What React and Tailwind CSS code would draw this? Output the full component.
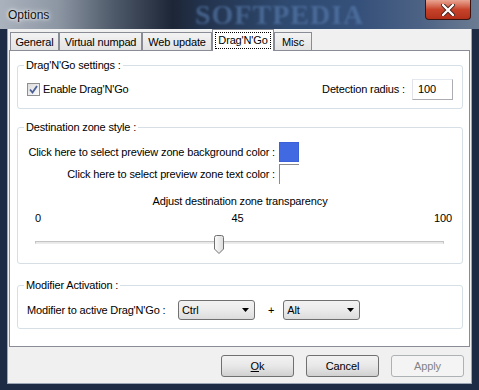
import React, { useState } from "react";

const FONT = "font-['Liberation_Sans',Arial,sans-serif] text-[11px] tracking-[-0.15px] leading-[13px] text-black";

function Tab({ label, width, active, onClick }) {
    if (active) {
        return (
            <div
                onClick={onClick}
                className={`relative z-10 -mb-[1px] flex h-[22px] items-start justify-center border border-b-0 border-[#898c95] bg-white pt-[2px] ${width}`}
            >
                <span className="border border-dotted border-black px-[2px] py-[1px]">{label}</span>
            </div>
        );
    }
    return (
        <div
            onClick={onClick}
            className={`flex h-[18px] items-center justify-center border border-b-0 border-[#898c95] bg-gradient-to-b from-[#f3f3f3] to-[#e3e3e3] pt-[2px] ${width}`}
        >
            {label}
        </div>
    );
}

function Group({ title, className, children }) {
    return (
        <div className={`relative ml-[7px] w-[446px] rounded-[3px] border border-[#d5dfe5] ${className}`}>
            <span className="absolute -top-[7px] left-[6px] bg-white px-[2px]">{title}</span>
            {children}
        </div>
    );
}

function Combo({ value }) {
    return (
        <div className="flex h-[20px] w-[77px] items-center justify-between rounded-[3px] border border-[#707070] bg-gradient-to-b from-[#f2f2f2] via-[#ebebeb] to-[#dcdcdc] pl-[3px] pr-[5px]">
            <span>{value}</span>
            <svg width="7" height="4" viewBox="0 0 7 4">
                <path d="M0 0 H7 L3.5 4 Z" fill="#000" />
            </svg>
        </div>
    );
}

function Button({ children, disabled }) {
    return (
        <div
            className={classNames(
                "flex h-[22px] w-[73px] items-center justify-center rounded-[3px] border",
                disabled
                    ? "border-[#adb2b5] bg-[#f4f4f4] text-[#838383]"
                    : "border-[#707070] bg-gradient-to-b from-[#f2f2f2] via-[#e8e8e8] to-[#d0d0d0]"
            )}
        >
            {children}
        </div>
    );
}

function classNames(...classes) {
    return classes.filter(Boolean).join(" ");
}

export default function App() {
    const [tab, setTab] = useState(3);
    const [enabled, setEnabled] = useState(true);

    const tabs = [
        { label: "General", width: "w-[49px]" },
        { label: "Virtual numpad", width: "w-[83px]" },
        { label: "Web update", width: "w-[70px]" },
        { label: "Drag'N'Go", width: "w-[62px]" },
        { label: "Misc", width: "w-[38px]" },
    ];

    return (
        <div className={`relative h-[390px] w-[479px] overflow-hidden bg-[#1d2b44] ${FONT}`}>
            {/* TITLE BAR */}
            <div className="relative flex h-[29px] items-center bg-[linear-gradient(to_right,#aab2bd_0%,#8d97a4_12%,#4d5868_24%,#1d2636_36%,#22324c_42%,#2f4a70_60%,#35507a_75%,#4d6385_88%,#6b7b92_100%)] pl-[8px] pt-[1px]">
                <span className="text-[12px] tracking-normal text-[#111] [text-shadow:0_0_6px_#fff,0_0_3px_#fff]">Options</span>
                <span className="absolute left-[195px] top-0 whitespace-nowrap font-['Liberation_Serif',serif] text-[28px] font-bold leading-[29px] tracking-[1px] text-[#5a7eb0] opacity-60 blur-[1px]">
                    SOFTPEDIA
                </span>

                {/* close button */}
                <div className="absolute right-[8px] top-0 flex h-[20px] w-[46px] items-center justify-center rounded-b-[4px] border border-t-0 border-[#3a1410] bg-gradient-to-b from-[#e8a593] via-[#c7432a] to-[#b2301a]">
                    <svg width="14" height="12" viewBox="0 0 14 12">
                        <path d="M2 1 L12 11 M12 1 L2 11" stroke="#40201a" strokeWidth="4" strokeLinecap="round" />
                        <path d="M2 1 L12 11 M12 1 L2 11" stroke="#fff" strokeWidth="2.4" strokeLinecap="round" />
                    </svg>
                </div>
            </div>

            {/* CLIENT */}
            <div className="ml-[8px] flex h-[354px] w-[463px] flex-col bg-[#f0f0f0] outline outline-1 outline-[#9aa6b6]">
                {/* TABS */}
                <div className="ml-[2px] mt-[1px] flex h-[20px] items-end">
                    {tabs.map((t, i) => (
                        <Tab key={t.label} label={t.label} width={t.width} active={tab === i} onClick={() => setTab(i)} />
                    ))}
                </div>

                {/* PANEL */}
                <div className="mx-[1px] h-[297px] border border-[#898c95] bg-white">
                    <Group title="Drag'N'Go settings :" className="mt-[14px] h-[44px]">
                        <div className="flex h-full items-center justify-between pl-[9px] pr-[9px] pt-[5px]">
                            <label className="flex items-center gap-[3px]" onClick={() => setEnabled(!enabled)}>
                                <span className="flex h-[13px] w-[13px] items-center justify-center border border-[#8e8f8f] bg-gradient-to-br from-[#dcdcdc] to-[#fbfbfb]">
                                    {enabled && (
                                        <svg width="9" height="9" viewBox="0 0 9 9">
                                            <path d="M1 4.5 L3.5 7.5 L8 1" stroke="#4a5f97" strokeWidth="1.8" fill="none" />
                                        </svg>
                                    )}
                                </span>
                                <span>Enable Drag'N'Go</span>
                            </label>
                            <div className="flex items-center gap-[7px]">
                                <span>Detection radius :</span>
                                <div className="flex h-[21px] w-[41px] items-center border border-[#abadb3] border-t-[#e3e9ef] border-l-[#e2e3ea] pl-[5px]">
                                    100
                                </div>
                            </div>
                        </div>
                    </Group>

                    <Group title="Destination zone style :" className="mt-[18px] h-[137px]">
                        <div className="pl-[8px] pt-[14px]">
                            <div className="flex h-[20px] items-center">
                                <span className="w-[249px] text-right">Click here to select preview zone background color :</span>
                                <span className="ml-[4px] h-[20px] w-[20px] border border-[#3c60d8] bg-[#4169e1]" />
                            </div>
                            <div className="mt-[2px] flex h-[20px] items-center">
                                <span className="w-[249px] text-right">Click here to select preview zone text color :</span>
                                <span className="ml-[4px] h-[20px] w-[20px] border-l border-t border-[#8c8c8c] bg-white" />
                            </div>
                        </div>
                        <div className="mt-[11px] text-center">Adjust destination zone transparency</div>
                        <div className="ml-[17px] mr-[10px] mt-[4px] flex">
                            <span>0</span>
                            <span className="flex-1 text-center">45</span>
                            <span>100</span>
                        </div>
                        <div className="relative ml-[17px] mt-[10px] h-[19px] w-[409px]">
                            <div className="absolute left-0 right-0 top-[6px] h-[3px] border border-[#c4c4c4] border-b-[#ececec] bg-[#e8e8e8]" />
                            <svg className="absolute left-[178px] top-0" width="12" height="19" viewBox="0 0 12 19">
                                <defs>
                                    <linearGradient id="thumb" x1="0" y1="0" x2="1" y2="0">
                                        <stop offset="0" stopColor="#fcfcfc" />
                                        <stop offset="1" stopColor="#dcdcdc" />
                                    </linearGradient>
                                </defs>
                                <path
                                    d="M1.5 2.5 Q1.5 0.5 3.5 0.5 H8.5 Q10.5 0.5 10.5 2.5 V14 L6 18.5 L1.5 14 Z"
                                    fill="url(#thumb)"
                                    stroke="#707070"
                                />
                            </svg>
                        </div>
                    </Group>

                    <Group title="Modifier Activation :" className="mt-[21px] h-[44px]">
                        <div className="flex h-full items-center pl-[9px] pt-[6px]">
                            <span className="w-[151px]">Modifier to active Drag'N'Go :</span>
                            <Combo value="Ctrl" />
                            <span className="ml-[13px] mr-[9px]">+</span>
                            <Combo value="Alt" />
                        </div>
                    </Group>
                </div>

                {/* BUTTONS */}
                <div className="mt-[8px] flex justify-end gap-[12px] pr-[7px]">
                    <Button>
                        <span className="underline">O</span>k
                    </Button>
                    <Button>Cancel</Button>
                    <Button disabled>Apply</Button>
                </div>
            </div>
        </div>
    );
}
